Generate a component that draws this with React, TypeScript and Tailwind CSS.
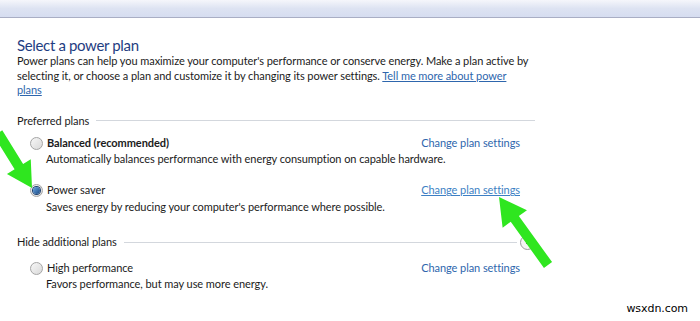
import React from "react";

type Pt = [number, number];

// builds the polygon for a fat arrow from tail to tip
function arrowPoints(tail: Pt, tip: Pt, shaft: number, head: number, headLen: number) {
  const dx = tip[0] - tail[0];
  const dy = tip[1] - tail[1];
  const len = Math.hypot(dx, dy);
  const ux = dx / len;
  const uy = dy / len;
  const nx = -uy;
  const ny = ux;
  const bx = tip[0] - ux * headLen;
  const by = tip[1] - uy * headLen;
  const pts: Pt[] = [
    [tail[0] + nx * shaft * 0.5, tail[1] + ny * shaft * 0.5],
    [bx + nx * shaft * 0.5, by + ny * shaft * 0.5],
    [bx + nx * head * 0.5, by + ny * head * 0.5],
    tip,
    [bx - nx * head * 0.5, by - ny * head * 0.5],
    [bx - nx * shaft * 0.5, by - ny * shaft * 0.5],
    [tail[0] - nx * shaft * 0.5, tail[1] - ny * shaft * 0.5],
  ];
  return pts.map((p) => p.join(",")).join(" ");
}

function Radio({ checked }: { checked?: boolean }) {
  return (
    <span className="flex h-[13px] w-[13px] shrink-0 items-center justify-center rounded-full border border-[#a5a5a5] bg-gradient-to-br from-[#f7f7f7] to-[#d9d9d9]">
      {checked && (
        <span className="h-[7px] w-[7px] rounded-full bg-gradient-to-br from-[#6aa6e0] to-[#1a4a86] ring-1 ring-[#1d3f6e]" />
      )}
    </span>
  );
}

function Plan({
  name,
  desc,
  bold,
  checked,
  hover,
  gap = "mt-[1px]",
}: {
  name: string;
  desc: string;
  bold?: boolean;
  checked?: boolean;
  hover?: boolean;
  gap?: string;
}) {
  return (
    <div className="pl-[13px] pr-[15px]">
      <div className="flex h-[16px] items-center">
        <Radio checked={checked} />
        <span className={`ml-[4px] ${bold ? "font-bold" : ""}`}>{name}</span>
        <span
          className={`ml-auto ${hover ? "text-[#3d7fc4] underline" : "text-[#2e66ad]"}`}
        >
          Change plan settings
        </span>
      </div>
      <div className={`pl-[16px] ${gap}`}>{desc}</div>
    </div>
  );
}

export default function App() {
  return (
    <div
      className="relative h-[321px] w-[700px] overflow-hidden bg-white text-[11px] leading-[14.5px] tracking-[-0.07px] text-[#1b1b1b]"
      style={{ fontFamily: '"Segoe UI", Lato, "Open Sans", sans-serif' }}
    >
      <div className="h-[18px] border-b border-[#a9aec4] bg-gradient-to-b from-[#f5f6fb] via-[#dde3f2] to-[#d6ddf0]" />

      <div className="w-[535px] pl-[17px] pt-[18px]">
        <h1 className="text-[15px] leading-[18px] tracking-[-0.35px] text-[#1f3d82]">Select a power plan</h1>
        <p className="w-[513px]">
          Power plans can help you maximize your computer's performance or conserve energy. Make a plan active by
          selecting it, or choose a plan and customize it by changing its power settings.{" "}
          <span className="text-[#2e66ad] underline">Tell me more about power</span>
          <br />
          <span className="text-[#2e66ad] underline">plans</span>
        </p>

        <div className="mt-[16px] flex items-center">
          <span>Preferred plans</span>
          <span className="ml-[7px] h-px flex-1 bg-[#d3d7dd]" />
        </div>

        <div className="mt-[7px]">
          <Plan
            name="Balanced (recommended)"
            desc="Automatically balances performance with energy consumption on capable hardware."
            bold
          />
        </div>
        <div className="mt-[16px]">
          <Plan
            name="Power saver"
            desc="Saves energy by reducing your computer's performance where possible."
            checked
            hover
            gap="mt-[1px]"
          />
        </div>

        <div className="mt-[21px] flex items-center">
          <span>Hide additional plans</span>
          <span className="ml-[7px] h-px flex-1 bg-[#d3d7dd]" />
          <span className="ml-[3px] flex h-[15px] w-[15px] items-center justify-center rounded-full border border-[#9b9b9b] bg-[#f4f4f4]">
            <span className="h-[3px] w-[3px] rounded-full bg-black" />
          </span>
        </div>

        <div className="mt-[10px]">
          <Plan name="High performance" desc="Favors performance, but may use more energy." />
        </div>
      </div>

      <div
        className="absolute bottom-[5px] right-[12px] text-[11px] leading-[14px] text-black"
        style={{ fontFamily: '"DejaVu Sans", sans-serif' }}
      >
        wsxdn.com
      </div>

      <svg className="pointer-events-none absolute left-0 top-0" width={700} height={321}>
        <polygon points={arrowPoints([-2, 133], [32, 188], 10, 28, 25)} fill="#2fe61f" />
        <polygon points={arrowPoints([548, 265], [499, 197], 10, 30, 27)} fill="#2fe61f" />
      </svg>
    </div>
  );
}
